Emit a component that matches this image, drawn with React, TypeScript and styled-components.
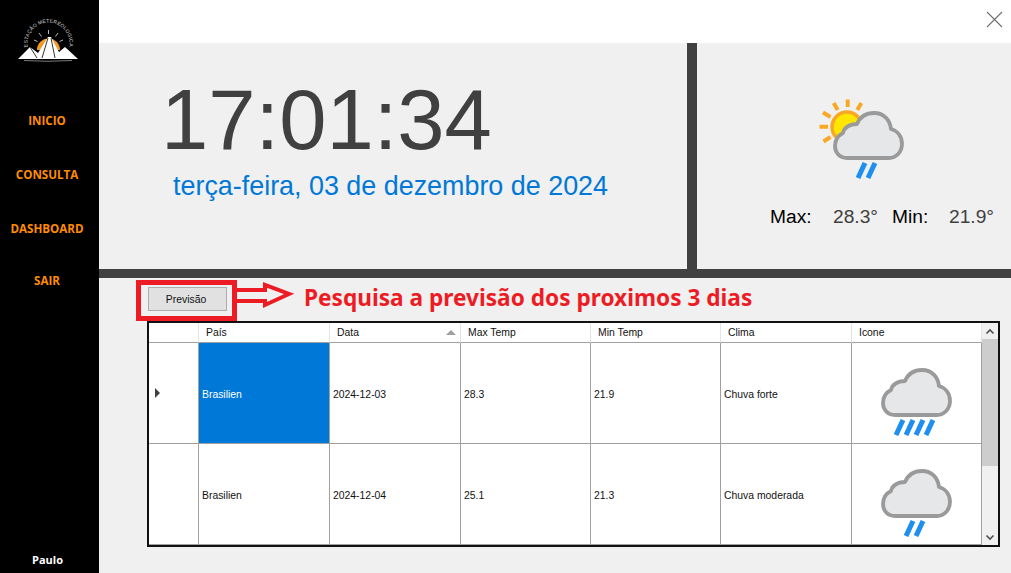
import React from "react";
import styled, { createGlobalStyle } from "styled-components";

const Global = createGlobalStyle`
  html, body { margin: 0; padding: 0; width: 1011px; height: 573px; overflow: hidden; background: #f0f0f0; }
  * { box-sizing: border-box; }
`;

const Page = styled.div`
  display: grid;
  grid-template-columns: 99px 1fr;
  width: 1011px;
  height: 573px;
  font-family: "Liberation Sans", Arial, sans-serif;
`;

const Sidebar = styled.nav`
  background: #000;
  display: flex;
  flex-direction: column;
  align-items: center;
  padding-top: 18px;
`;

const LogoSvg = styled.svg`
  flex: none;
  margin-right: 1px;
`;

const MenuList = styled.div`
  display: flex;
  flex-direction: column;
  align-items: center;
  margin: 51px 5px 0 0;
  flex: 1;
`;

const MenuItem = styled.div<{ $h: number }>`
  height: ${(p) => p.$h}px;
  color: #ff8c00;
  font: 700 11.6px "Open Sans", sans-serif;
  line-height: 16px;
`;

const UserName = styled.div`
  color: #fff;
  font: 700 11px "Open Sans", sans-serif;
  margin-bottom: 6px;
  margin-left: -4px;
`;

const Main = styled.main`
  display: flex;
  flex-direction: column;
  min-width: 0;
  position: relative;
`;

const TopBar = styled.div`
  height: 43px;
  background: #fff;
  display: flex;
  justify-content: flex-end;
  padding: 11px 8px 0 0;
`;

const Hero = styled.section`
  height: 235px;
  display: grid;
  grid-template-columns: 598px 1fr;
  border-bottom: 9px solid #404040;
`;

const ClockPanel = styled.div`
  border-right: 10px solid #404040;
  padding: 29px 0 0 62px;
  min-width: 0;
  white-space: nowrap;
`;

const Clock = styled.div`
  font-size: 85px;
  line-height: 96px;
  color: #404040;
`;

const DateText = styled.div`
  font-size: 26.9px;
  line-height: 30px;
  color: #0078d7;
  margin: 3px 0 0 12px;
`;

const WeatherPanel = styled.div`
  display: flex;
  flex-direction: column;
  padding: 53px 0 0 73px;
`;

const WeatherIcon = styled.svg`
  flex: none;
  margin-left: 45px;
`;

const MinMax = styled.div`
  display: flex;
  font-size: 19.2px;
  line-height: 22px;
  margin-top: 26px;
  white-space: nowrap;
`;

const MinMaxPart = styled.span<{ $w: number; $value?: boolean }>`
  width: ${(p) => p.$w}px;
  flex: none;
  color: ${(p) => (p.$value ? "#404040" : "#000")};
`;

const Lower = styled.section`
  flex: 1;
  padding: 43px 0 0 48px;
  position: relative;
`;

const ActionButton = styled.button`
  position: absolute;
  left: 49px;
  top: 9px;
  width: 79px;
  height: 24px;
  background: #e1e1e1;
  border: 1px solid #adadad;
  font: 10.4px "Liberation Sans", sans-serif;
  color: #111;
  padding: 0 3px 0 0;
`;

const RedFrame = styled.div`
  position: absolute;
  left: 37px;
  top: 2px;
  width: 101px;
  height: 41px;
  border: 5px solid #ed1c24;
`;

const Arrow = styled.svg`
  position: absolute;
  left: 137px;
  top: 2px;
`;

const Callout = styled.div`
  position: absolute;
  left: 205px;
  top: 5px;
  font: 700 22.65px "Noto Sans", "Open Sans", sans-serif;
  line-height: 30px;
  color: #ed1c24;
  white-space: nowrap;
`;

const GridFrame = styled.div`
  width: 853px;
  height: 226px;
  border: 2px solid #111;
  background: #fff;
  display: grid;
  grid-template-columns: 833px 16px;
  overflow: hidden;
`;

const Table = styled.div`
  display: grid;
  grid-template-columns: 50px 131px 131px 130px 130px 131px 130px;
  grid-template-rows: 20px 101px 101px;
  font-size: 10.4px;
  color: #111;
  overflow: hidden;
`;

const HeadCell = styled.div`
  border-right: 1px solid #e4e4e4;
  border-bottom: 1px solid #a0a0a0;
  padding: 3px 0 0 7px;
  line-height: 14px;
  position: relative;
`;

const SortMark = styled.span`
  position: absolute;
  right: 4px;
  top: 7px;
  width: 0;
  height: 0;
  border-left: 5px solid transparent;
  border-right: 5px solid transparent;
  border-bottom: 5px solid #a0a0a0;
`;

const RowHead = styled.div`
  border-right: 1px solid #a0a0a0;
  border-bottom: 1px solid #a0a0a0;
  display: flex;
  align-items: center;
  padding-left: 6px;
`;

const Pointer = styled.span`
  width: 0;
  height: 0;
  border-top: 5px solid transparent;
  border-bottom: 5px solid transparent;
  border-left: 5px solid #404040;
`;

const Cell = styled.div<{ $selected?: boolean }>`
  border-right: 1px solid #a0a0a0;
  border-bottom: 1px solid #a0a0a0;
  display: flex;
  align-items: center;
  padding: 2px 0 0 3px;
  white-space: nowrap;
  background: ${(p) => (p.$selected ? "#0078d7" : "#fff")};
  color: ${(p) => (p.$selected ? "#fff" : "#111")};
`;

const IconCell = styled(Cell)`
  justify-content: center;
  padding: 17px 0 0 0;
`;

const Scrollbar = styled.div`
  background: #f0f0f0;
  display: grid;
  grid-template-rows: 16px 127px 1fr 16px;
  justify-items: center;
  align-items: center;
`;

const ScrollThumb = styled.div`
  grid-row: 2;
  width: 100%;
  height: 100%;
  background: #cdcdcd;
`;

const CloseIcon = () => (
  <svg width="17" height="17" viewBox="0 0 17 17" fill="none" stroke="#6f6f6f" strokeWidth="1.1">
    <path d="M1 1 L16 16 M16 1 L1 16" />
  </svg>
);

const Logo = () => (
  <LogoSvg width="66" height="44" viewBox="16 18 66 44">
    <defs>
      <path id="logoArc" d="M28.5 50 A21 21 0 1 1 68.5 50" />
    </defs>
    <text fontFamily="Liberation Sans" fontSize="5" fill="#d8d8d8">
      <textPath href="#logoArc" startOffset="3" textLength="72" lengthAdjust="spacing">
        ESTAÇÃO METEREOLOGICA
      </textPath>
    </text>
    <path d="M48.5 30v4M39 33l2.500 3.500M58 33l-2.500 3.500M34 40l3.500 1.500M63 40l-3.500 1.500" stroke="#cfcfcf" strokeWidth=".9" />
    <path d="M37 50 A11.500 11.500 0 0 1 60 50 Z" fill="#f39a23" />
    <path d="M18 59 L30 47 L38 53 L48 37 L51 37 L59 52 L65 47 L78 59 Z" fill="#fff" />
    <path d="M48 38 L42 58 M51 38 L55 58 M30 47 L37 58" stroke="#000" strokeWidth=".8" fill="none" />
    <path d="M24 60.500 Q48 62 72 60.500" stroke="#888" strokeWidth=".9" fill="none" />
  </LogoSvg>
);

const CloudShape = ({ drops }: { drops: number }) => (
  <g transform="translate(18 15)">
    <path
      d="M14 47 C6 47 2 41 2 35 C2 28 6 24 10 22 C11 17 16 13 24 13 C27 6 33 2 41 2 C51 2 57 9 58 18 C65 20 69 26 69 33 C69 41 63 47 56 47 Z"
      fill="#e6e7e9"
      stroke="#9a9a9a"
      strokeWidth="3.8"
      strokeLinejoin="round"
    />
    {Array.from({ length: drops }).map((_, i) => {
      const cx = 33 + (i - (drops - 1) / 2) * 10;
      return <path key={i} d={`M${cx + 4} 52 L${cx - 3} 67`} stroke="#1e8fef" strokeWidth="5" />;
    })}
  </g>
);

const SunCloud = () => (
  <WeatherIcon width="90" height="84" viewBox="0 0 90 84" fill="none">
    <circle cx="32" cy="31" r="15" fill="#ffe600" stroke="#f9a825" strokeWidth="3.5" />
    <path
      d="M32.700 3.500V11M18.700 7l4 7M46.300 7l-4 7M8 16.500l7.500 4.500M4.500 30.700H13M8.500 45.500l7-4.500"
      stroke="#f9a825"
      strokeWidth="4"
    />
    <CloudShape drops={2} />
  </WeatherIcon>
);

const RainCloud = ({ drops }: { drops: number }) => (
  <svg width="71" height="68" viewBox="18 15 71 68" fill="none">
    <CloudShape drops={drops} />
  </svg>
);

const Up = () => (
  <svg width="10" height="7" viewBox="0 0 10 7" fill="none" stroke="#505050" strokeWidth="1.6">
    <path d="M1.500 5.500 L5 2 L8.500 5.500" />
  </svg>
);
const Down = () => (
  <svg width="10" height="7" viewBox="0 0 10 7" fill="none" stroke="#505050" strokeWidth="1.6">
    <path d="M1.500 1.500 L5 5 L8.500 1.500" />
  </svg>
);

const headers = ["País", "Data", "Max Temp", "Min Temp", "Clima", "Icone"];
const rows = [
  { pais: "Brasilien", data: "2024-12-03", max: "28.3", min: "21.9", clima: "Chuva forte", drops: 4, selected: true },
  { pais: "Brasilien", data: "2024-12-04", max: "25.1", min: "21.3", clima: "Chuva moderada", drops: 2, selected: false },
];

export default function App() {
  return (
    <Page>
      <Global />
      <Sidebar>
        <Logo />
        <MenuList>
          <MenuItem $h={54}>INICIO</MenuItem>
          <MenuItem $h={54}>CONSULTA</MenuItem>
          <MenuItem $h={52}>DASHBOARD</MenuItem>
          <MenuItem $h={16}>SAIR</MenuItem>
        </MenuList>
        <UserName>Paulo</UserName>
      </Sidebar>
      <Main>
        <TopBar>
          <CloseIcon />
        </TopBar>
        <Hero>
          <ClockPanel>
            <Clock>17:01:34</Clock>
            <DateText>terça-feira, 03 de dezembro de 2024</DateText>
          </ClockPanel>
          <WeatherPanel>
            <SunCloud />
            <MinMax>
              <MinMaxPart $w={63}>Max:</MinMaxPart>
              <MinMaxPart $w={59} $value>28.3°</MinMaxPart>
              <MinMaxPart $w={57}>Min:</MinMaxPart>
              <MinMaxPart $w={46} $value>21.9°</MinMaxPart>
            </MinMax>
          </WeatherPanel>
        </Hero>
        <Lower>
          <ActionButton>Previsão</ActionButton>
          <RedFrame />
          <Arrow width="62" height="32" viewBox="0 0 62 32" fill="none" stroke="#ed1c24" strokeWidth="4">
            <path d="M1 10 H29 V5 L53 14 L29 25 V21 H1" />
          </Arrow>
          <Callout>Pesquisa a previsão dos proximos 3 dias</Callout>
          <GridFrame>
            <Table>
              <HeadCell />
              {headers.map((h) => (
                <HeadCell key={h}>
                  {h}
                  {h === "Data" && <SortMark />}
                </HeadCell>
              ))}
              {rows.map((r) => (
                <React.Fragment key={r.data}>
                  <RowHead>{r.selected && <Pointer />}</RowHead>
                  <Cell $selected={r.selected}>{r.pais}</Cell>
                  <Cell>{r.data}</Cell>
                  <Cell>{r.max}</Cell>
                  <Cell>{r.min}</Cell>
                  <Cell>{r.clima}</Cell>
                  <IconCell>
                    <RainCloud drops={r.drops} />
                  </IconCell>
                </React.Fragment>
              ))}
            </Table>
            <Scrollbar>
              <Up />
              <ScrollThumb />
              <span />
              <Down />
            </Scrollbar>
          </GridFrame>
        </Lower>
      </Main>
    </Page>
  );
}
